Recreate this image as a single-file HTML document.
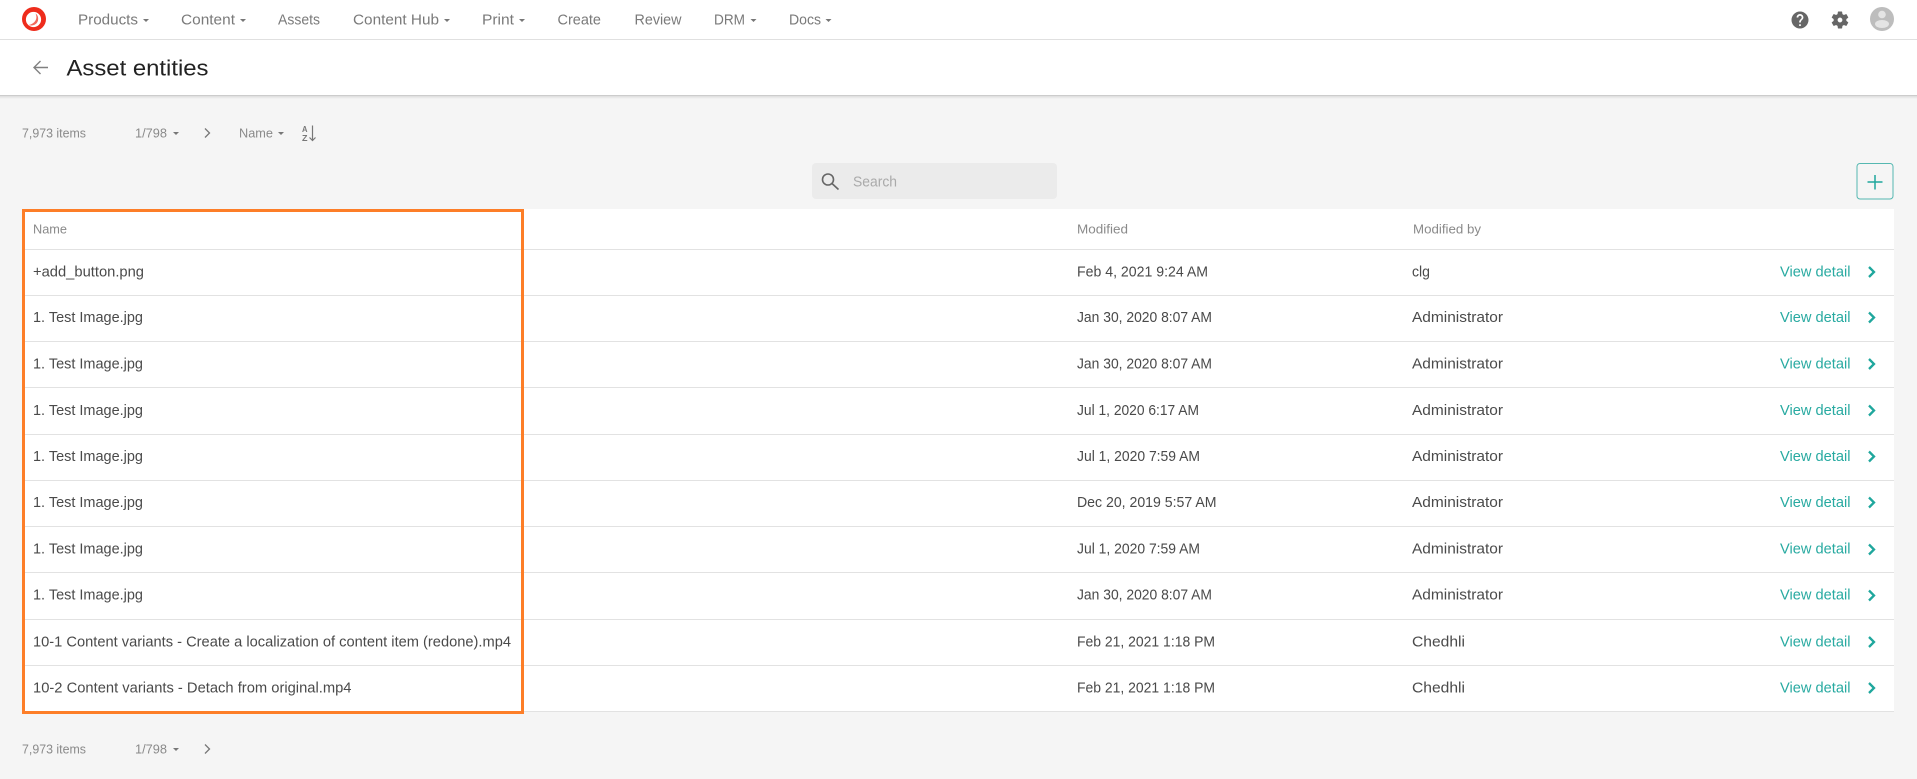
<!DOCTYPE html>
<html lang="en">
<head>
<meta charset="utf-8">
<title>Asset entities</title>
<style>
html,body{margin:0;padding:0;background:#f5f5f5;width:1917px;height:779px;overflow:hidden}
svg{display:block}
text{font-family:"Liberation Sans",sans-serif;font-size:15px;fill:#4a4a4a}
.nav{fill:#7a7a7a;font-size:15px}
.sm{fill:#8a8a8a;font-size:13px}
.th{fill:#8a8a8a;font-size:13px}
.link{fill:#28aaa1}
</style>
</head>
<body>
<svg width="1917" height="779" viewBox="0 0 1917 779" xmlns="http://www.w3.org/2000/svg">
<defs>
<linearGradient id="sh" x1="0" y1="0" x2="0" y2="1"><stop offset="0" stop-color="#000" stop-opacity=".1"/><stop offset="1" stop-color="#000" stop-opacity="0"/></linearGradient>
</defs>
<rect width="1917" height="779" fill="#f5f5f5"/>
<!-- top nav -->
<rect width="1917" height="39" fill="#fff"/>
<rect y="39" width="1917" height="1" fill="#e0e0e0"/>
<circle cx="34" cy="19" r="12" fill="#ee2c1c"/>
<circle cx="33.500" cy="19.500" r="7.600" fill="#fff"/>
<path d="M28.500 25c4 1.500 8.500-.5 9.500-4.500.6-3-.2-5.500-2.500-7 1.200 2.500 1.200 5 0 7-1.500 2.500-4 4-7 4.500z" fill="#f2695c"/>
<g>
<text class="nav" x="78" y="24.500" textLength="60" lengthAdjust="spacingAndGlyphs">Products</text>
<text class="nav" x="181" y="24.500" textLength="54" lengthAdjust="spacingAndGlyphs">Content</text>
<text class="nav" x="278" y="24.500" textLength="42" lengthAdjust="spacingAndGlyphs">Assets</text>
<text class="nav" x="353" y="24.500" textLength="86" lengthAdjust="spacingAndGlyphs">Content Hub</text>
<text class="nav" x="482" y="24.500" textLength="32" lengthAdjust="spacingAndGlyphs">Print</text>
<text class="nav" x="557.500" y="24.500" textLength="43.500" lengthAdjust="spacingAndGlyphs">Create</text>
<text class="nav" x="634.500" y="24.500" textLength="47" lengthAdjust="spacingAndGlyphs">Review</text>
<text class="nav" x="714" y="24.500" textLength="31" lengthAdjust="spacingAndGlyphs">DRM</text>
<text class="nav" x="789" y="24.500" textLength="32" lengthAdjust="spacingAndGlyphs">Docs</text>
</g>
<g fill="#777">
<path d="M143 19h6l-3 3z"/><path d="M240 19h6l-3 3z"/><path d="M444 19h6l-3 3z"/><path d="M519 19h6l-3 3z"/><path d="M750.500 19h6l-3 3z"/><path d="M825.500 19h6l-3 3z"/>
</g>
<g transform="translate(1789.800,9.800) scale(.85)"><path fill="#666" d="M12 2C6.480 2 2 6.480 2 12s4.480 10 10 10 10-4.480 10-10S17.520 2 12 2zm1 17h-2v-2h2v2zm2.070-7.750l-.9.920C13.450 12.900 13 13.500 13 15h-2v-.5c0-1.100.45-2.100 1.170-2.830l1.240-1.260c.37-.36.59-.86.59-1.410 0-1.100-.9-2-2-2s-2 .9-2 2H8c0-2.210 1.790-4 4-4s4 1.790 4 4c0 .88-.36 1.680-.93 2.250z"/></g>
<g transform="translate(1829.800,9.800) scale(.85)"><path fill="#666" d="M19.430 12.980c.04-.32.07-.64.07-.98s-.03-.66-.07-.98l2.110-1.650c.19-.15.24-.42.12-.64l-2-3.460c-.12-.22-.39-.3-.61-.22l-2.490 1c-.52-.4-1.080-.73-1.690-.98l-.38-2.650C14.460 2.180 14.250 2 14 2h-4c-.25 0-.46.180-.49.420l-.38 2.650c-.61.250-1.170.590-1.690.980l-2.490-1c-.23-.09-.49 0-.61.220l-2 3.460c-.13.220-.07.490.12.640l2.110 1.650c-.04.320-.07.650-.07.980s.03.660.07.980l-2.110 1.650c-.19.150-.24.420-.12.640l2 3.460c.12.220.39.300.61.220l2.490-1c.52.400 1.080.730 1.690.980l.38 2.650c.03.240.24.420.49.420h4c.25 0 .46-.18.49-.42l.38-2.650c.61-.25 1.170-.59 1.690-.98l2.490 1c.23.090.49 0 .61-.22l2-3.460c.12-.22.07-.49-.12-.64l-2.010-1.650zM12 14.800c-1.550 0-2.800-1.250-2.800-2.800s1.250-2.800 2.800-2.800 2.800 1.250 2.800 2.800-1.250 2.800-2.800 2.800z"/></g>
<circle cx="1882" cy="19" r="12" fill="#bdbdbd"/>
<circle cx="1882" cy="14.500" r="3.800" fill="#e4e4e4"/>
<ellipse cx="1882" cy="24" rx="7" ry="4" fill="#e4e4e4"/>
<!-- title bar -->
<rect y="40" width="1917" height="55" fill="#fff"/>
<rect y="95" width="1917" height="1" fill="#ccc"/>
<rect y="96" width="1917" height="3" fill="url(#sh)"/>
<path d="M48 67.500H34M40.500 61L34 67.500l6.500 6.500" fill="none" stroke="#808080" stroke-width="1.400"/>
<text x="66.500" y="75.500" style="font-size:22.500px;fill:#222" textLength="142" lengthAdjust="spacingAndGlyphs">Asset entities</text>
<!-- toolbar -->
<text class="sm" x="22" y="137.500" textLength="64" lengthAdjust="spacingAndGlyphs">7,973 items</text>
<text class="sm" x="135" y="137.500" textLength="32" lengthAdjust="spacingAndGlyphs">1/798</text>
<path d="M173 132h6l-3 3z" fill="#777"/>
<path d="M205 128.500l4.500 4.500-4.500 4.500" fill="none" stroke="#777" stroke-width="1.300"/>
<text class="sm" x="239" y="137.500" textLength="34" lengthAdjust="spacingAndGlyphs">Name</text>
<path d="M278 132h6l-3 3z" fill="#777"/>
<text x="302" y="132" style="font-size:8px;font-weight:bold;fill:#777" textLength="5.500" lengthAdjust="spacingAndGlyphs">A</text>
<text x="302" y="141" style="font-size:8px;font-weight:bold;fill:#777" textLength="5.500" lengthAdjust="spacingAndGlyphs">Z</text>
<path d="M312.500 125.500V140M309.500 137.500l3 3 3-3" fill="none" stroke="#777" stroke-width="1.200"/>
<!-- search -->
<rect x="812" y="163" width="245" height="36" rx="4" fill="#ebebeb"/>
<circle cx="828" cy="179.500" r="5.500" fill="none" stroke="#666" stroke-width="1.600"/>
<path d="M832 183.500l6.500 6" fill="none" stroke="#666" stroke-width="1.600"/>
<text x="853" y="186.500" style="fill:#aaa" textLength="44" lengthAdjust="spacingAndGlyphs">Search</text>
<!-- add button -->
<rect x="1857" y="163.500" width="36" height="35.500" rx="3" fill="none" stroke="#55b8b1"/>
<path d="M1875 175v14.500M1867.500 182h15" stroke="#1fa79d" stroke-width="1.500" fill="none"/>
<!-- table -->
<rect x="22" y="209" width="1872" height="503" fill="#fff"/>
<g fill="#e2e2e2">
<rect x="22" y="249" width="1872" height="1"/><rect x="22" y="295" width="1872" height="1"/><rect x="22" y="341" width="1872" height="1"/><rect x="22" y="387" width="1872" height="1"/><rect x="22" y="434" width="1872" height="1"/><rect x="22" y="480" width="1872" height="1"/><rect x="22" y="526" width="1872" height="1"/><rect x="22" y="572" width="1872" height="1"/><rect x="22" y="619" width="1872" height="1"/><rect x="22" y="665" width="1872" height="1"/><rect x="22" y="711" width="1872" height="1"/>
</g>
<text class="th" x="33" y="233.500" textLength="34" lengthAdjust="spacingAndGlyphs">Name</text>
<text class="th" x="1077" y="233.500" textLength="51" lengthAdjust="spacingAndGlyphs">Modified</text>
<text class="th" x="1413" y="233.500" textLength="68" lengthAdjust="spacingAndGlyphs">Modified by</text>

<text x="33" y="276.500" textLength="111" lengthAdjust="spacingAndGlyphs">+add_button.png</text>
<text x="1077" y="276.500" textLength="131" lengthAdjust="spacingAndGlyphs">Feb 4, 2021 9:24 AM</text>
<text x="1412" y="276.500" textLength="18" lengthAdjust="spacingAndGlyphs">clg</text>

<text x="33" y="322" textLength="110" lengthAdjust="spacingAndGlyphs">1. Test Image.jpg</text>
<text x="1077" y="322" textLength="135" lengthAdjust="spacingAndGlyphs">Jan 30, 2020 8:07 AM</text>
<text x="1412" y="322" textLength="91" lengthAdjust="spacingAndGlyphs">Administrator</text>

<text x="33" y="368.500" textLength="110" lengthAdjust="spacingAndGlyphs">1. Test Image.jpg</text>
<text x="1077" y="368.500" textLength="135" lengthAdjust="spacingAndGlyphs">Jan 30, 2020 8:07 AM</text>
<text x="1412" y="368.500" textLength="91" lengthAdjust="spacingAndGlyphs">Administrator</text>

<text x="33" y="415" textLength="110" lengthAdjust="spacingAndGlyphs">1. Test Image.jpg</text>
<text x="1077" y="415" textLength="122" lengthAdjust="spacingAndGlyphs">Jul 1, 2020 6:17 AM</text>
<text x="1412" y="415" textLength="91" lengthAdjust="spacingAndGlyphs">Administrator</text>

<text x="33" y="461" textLength="110" lengthAdjust="spacingAndGlyphs">1. Test Image.jpg</text>
<text x="1077" y="461" textLength="123" lengthAdjust="spacingAndGlyphs">Jul 1, 2020 7:59 AM</text>
<text x="1412" y="461" textLength="91" lengthAdjust="spacingAndGlyphs">Administrator</text>

<text x="33" y="507" textLength="110" lengthAdjust="spacingAndGlyphs">1. Test Image.jpg</text>
<text x="1077" y="507" textLength="139.500" lengthAdjust="spacingAndGlyphs">Dec 20, 2019 5:57 AM</text>
<text x="1412" y="507" textLength="91" lengthAdjust="spacingAndGlyphs">Administrator</text>

<text x="33" y="553.500" textLength="110" lengthAdjust="spacingAndGlyphs">1. Test Image.jpg</text>
<text x="1077" y="553.500" textLength="123" lengthAdjust="spacingAndGlyphs">Jul 1, 2020 7:59 AM</text>
<text x="1412" y="553.500" textLength="91" lengthAdjust="spacingAndGlyphs">Administrator</text>

<text x="33" y="599.500" textLength="110" lengthAdjust="spacingAndGlyphs">1. Test Image.jpg</text>
<text x="1077" y="599.500" textLength="135" lengthAdjust="spacingAndGlyphs">Jan 30, 2020 8:07 AM</text>
<text x="1412" y="599.500" textLength="91" lengthAdjust="spacingAndGlyphs">Administrator</text>

<text x="33" y="646.500" textLength="478" lengthAdjust="spacingAndGlyphs">10-1 Content variants - Create a localization of content item (redone).mp4</text>
<text x="1077" y="646.500" textLength="138" lengthAdjust="spacingAndGlyphs">Feb 21, 2021 1:18 PM</text>
<text x="1412" y="646.500" textLength="53" lengthAdjust="spacingAndGlyphs">Chedhli</text>

<text x="33" y="692.500" textLength="318.500" lengthAdjust="spacingAndGlyphs">10-2 Content variants - Detach from original.mp4</text>
<text x="1077" y="692.500" textLength="138" lengthAdjust="spacingAndGlyphs">Feb 21, 2021 1:18 PM</text>
<text x="1412" y="692.500" textLength="53" lengthAdjust="spacingAndGlyphs">Chedhli</text>

<g>
<text class="link" x="1780" y="276.500" textLength="70.500" lengthAdjust="spacingAndGlyphs">View detail</text>
<text class="link" x="1780" y="322" textLength="70.500" lengthAdjust="spacingAndGlyphs">View detail</text>
<text class="link" x="1780" y="368.500" textLength="70.500" lengthAdjust="spacingAndGlyphs">View detail</text>
<text class="link" x="1780" y="415" textLength="70.500" lengthAdjust="spacingAndGlyphs">View detail</text>
<text class="link" x="1780" y="461" textLength="70.500" lengthAdjust="spacingAndGlyphs">View detail</text>
<text class="link" x="1780" y="507" textLength="70.500" lengthAdjust="spacingAndGlyphs">View detail</text>
<text class="link" x="1780" y="553.500" textLength="70.500" lengthAdjust="spacingAndGlyphs">View detail</text>
<text class="link" x="1780" y="599.500" textLength="70.500" lengthAdjust="spacingAndGlyphs">View detail</text>
<text class="link" x="1780" y="646.500" textLength="70.500" lengthAdjust="spacingAndGlyphs">View detail</text>
<text class="link" x="1780" y="692.500" textLength="70.500" lengthAdjust="spacingAndGlyphs">View detail</text>
</g>
<g fill="none" stroke="#1fa79d" stroke-width="2.300">
<path d="M1869 267l5 5-5 5"/>
<path d="M1869 312.500l5 5-5 5"/>
<path d="M1869 359l5 5-5 5"/>
<path d="M1869 405.500l5 5-5 5"/>
<path d="M1869 451.500l5 5-5 5"/>
<path d="M1869 497.500l5 5-5 5"/>
<path d="M1869 544.500l5 5-5 5"/>
<path d="M1869 590.500l5 5-5 5"/>
<path d="M1869 637l5 5-5 5"/>
<path d="M1869 683l5 5-5 5"/>
</g>
<!-- orange highlight -->
<rect x="23.500" y="210.500" width="499" height="502" fill="none" stroke="#fd7e28" stroke-width="3"/>
<!-- footer toolbar -->
<text class="sm" x="22" y="753.500" textLength="64" lengthAdjust="spacingAndGlyphs">7,973 items</text>
<text class="sm" x="135" y="753.500" textLength="32" lengthAdjust="spacingAndGlyphs">1/798</text>
<path d="M173 748h6l-3 3z" fill="#777"/>
<path d="M205 744.500l4.500 4.500-4.500 4.500" fill="none" stroke="#777" stroke-width="1.300"/>
</svg>
</body>
</html>
